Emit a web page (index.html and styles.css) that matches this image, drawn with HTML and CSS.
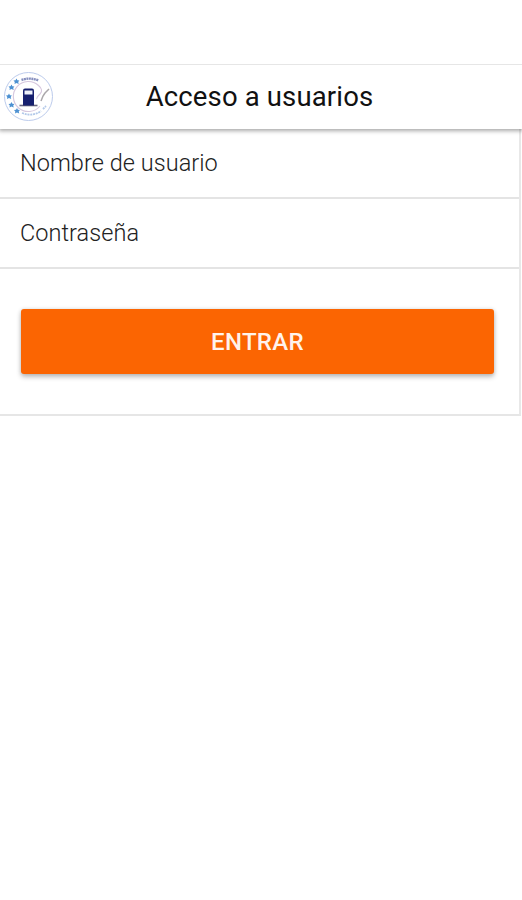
FILE: index.html
```html
<!DOCTYPE html>
<html lang="es">
<head>
<meta charset="utf-8">
<title>Acceso a usuarios</title>
<link rel="stylesheet" href="styles.css">
</head>
<body>
<header class="toolbar">
  <svg class="logo" viewBox="0 0 50 50" aria-hidden="true">
    <circle cx="24.500" cy="24.500" r="24" fill="#fff" stroke="#bccbec" stroke-width="1"/>
    <path d="M34.500 13.500A15 15 0 1 0 36 34M34 13Q40 18 36 22T33 27" fill="none" stroke="#d6c7de" stroke-width="1.100"/>
    <g fill="#4d91d2">
      <path id="star" d="M12.500 6.500l.9 1.700 2 .2-1.200 1.500.5 2-2.200-.8-2 .8.300-2-1.300-1.500 2-.2z"/>
      <use href="#star" x="-5" y="6"/>
      <use href="#star" x="-7.500" y="15"/>
      <use href="#star" x="-5" y="23.500"/>
      <use href="#star" x=".500" y="29.500"/>
    </g>
    <path d="M17.500 8Q26 5 34.500 8.500" fill="none" stroke="#8790bf" stroke-width="2.400" stroke-dasharray="2 .5"/>
    <path d="M18 41Q29 45 37 39M39 37l3-3" fill="none" stroke="#b3c9e9" stroke-width="1.800" stroke-dasharray="2 .8"/>
    <path d="M15.500 33.500h18" stroke="#69677f" stroke-width="1.600"/>
    <path fill="#17206f" d="M19 33.500V18.500q0-2 2-2h7q2 0 2 2v15z"/>
    <path fill="#eef1fa" d="M20.500 18.500h8v4h-8z"/>
    <path d="M37 29l2-5 2-3M41 21l4-4" fill="none" stroke="#aaa7aa" stroke-width="1.500"/>
  </svg>
  <h1 class="title">Acceso a usuarios</h1>
</header>
<main class="panel">
  <div class="field">Nombre de usuario</div>
  <div class="field">Contraseña</div>
  <div class="actions"><button class="submit" type="button">ENTRAR</button></div>
</main>
</body>
</html>
```
FILE: styles.css
```css
* { box-sizing: border-box; }
body {
  margin: 0;
  padding-top: 64px;
  min-height: 900px;
  background: #fff;
  font-family: Roboto, sans-serif;
}
.toolbar {
  position: relative;
  display: grid;
  grid-template-columns: 50px 1fr 50px;
  align-items: center;
  height: 65px;
  padding: 0 4px;
  border-top: 1px solid #e6e6e6;
  background: #fff;
  box-shadow: 0 1px 4px 1px rgba(0, 0, 0, .34);
  clip-path: inset(0 0 -12px);
}
.logo { width: 50px; height: 50px; }
.title {
  margin: 0 3px 1px 0;
  color: #111;
  font-size: 27.5px;
  font-weight: 400;
  line-height: 32px;
  letter-spacing: .15px;
  text-align: center;
}
.panel {
  width: 521px;
  border-right: 2px solid #e8e8e8;
  border-bottom: 2px solid #e6e6e6;
}
.field {
  height: 70px;
  padding-left: 20px;
  border-bottom: 2px solid #e4e4e4;
  color: #222;
  font-size: 23.5px;
  font-weight: 350;
  line-height: 69px;
  letter-spacing: .05px;
}
.actions { height: 145px; padding: 40px 25px 0 21px; }
.submit {
  display: block;
  width: 100%;
  height: 65px;
  padding: 0;
  border: 0;
  border-radius: 3px;
  background: #fb6502;
  box-shadow: 0 3px 5px rgba(0, 0, 0, .25), 0 0 4px rgba(0, 0, 0, .12);
  color: #fff3ed;
  font: 500 24px/67px Roboto, sans-serif;
  letter-spacing: .3px;
}
```
